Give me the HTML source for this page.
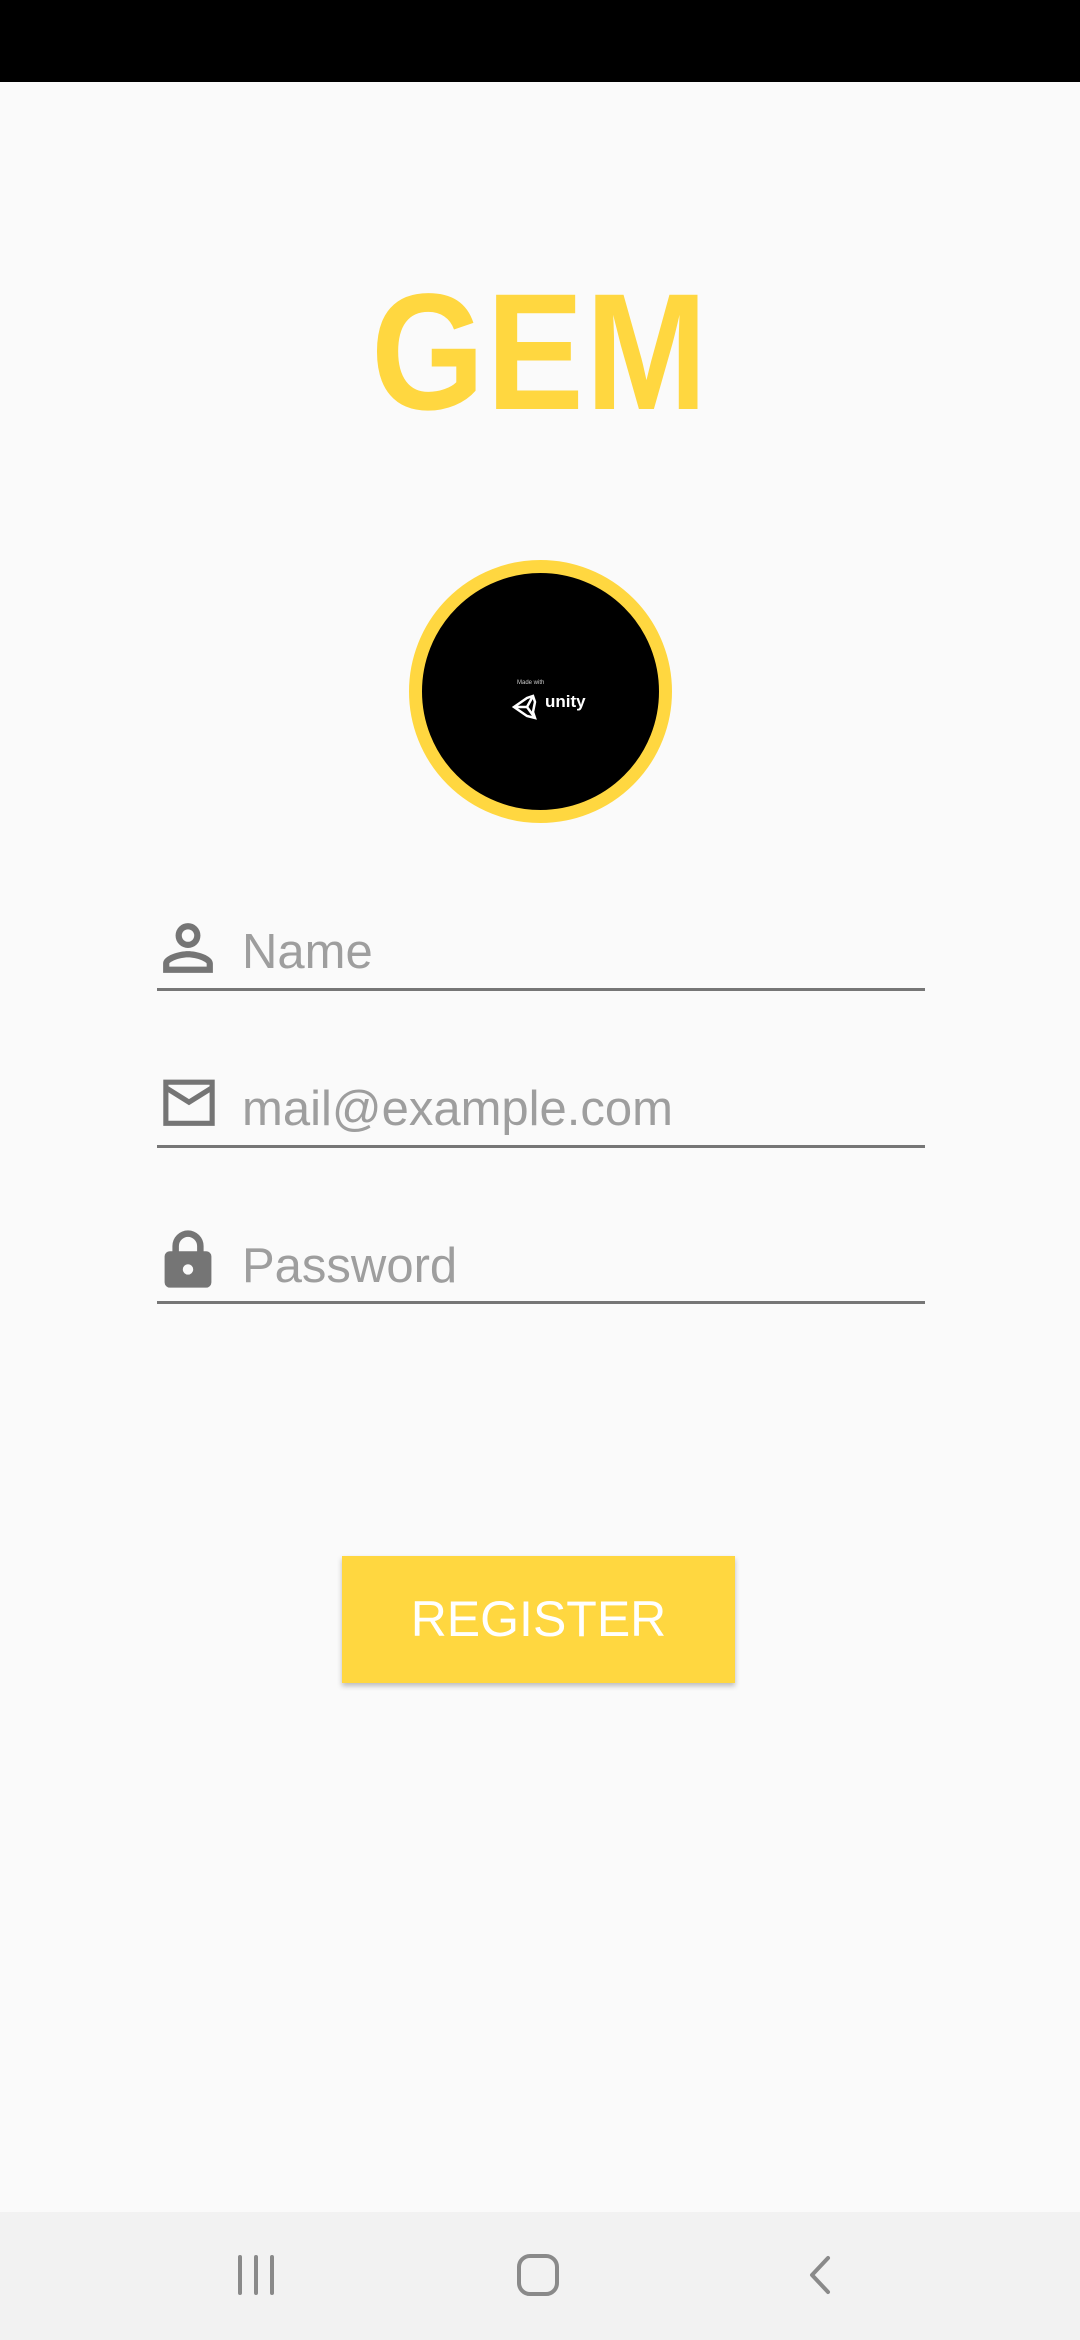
<!DOCTYPE html>
<html><head><meta charset="utf-8"><style>
*{margin:0;padding:0;box-sizing:border-box}
body{width:1080px;height:2340px;background:#fafafa;position:relative;overflow:hidden;font-family:"Liberation Sans",sans-serif}
.abs{position:absolute}
.status{left:0;top:0;width:1080px;height:82px;background:#000}
.gem{left:0;width:1080px;top:253px;text-align:center;font-size:166px;font-weight:bold;color:#FFD740;line-height:200px;transform:scaleX(0.88);letter-spacing:2px}
.circle{left:409px;top:560px;width:263px;height:263px;border-radius:50%;background:#000;border:13px solid #FFD740}
.line{left:157px;width:768px;height:3px;background:#767676}
.ph{left:242px;font-size:49px;color:#9e9e9e;line-height:1}
.btn{left:342px;top:1556px;width:393px;height:127px;background:#FFD740;color:#fff;font-size:50px;text-align:center;line-height:127px;box-shadow:0 3px 5px rgba(0,0,0,0.25)}
.nav{left:0;top:2212px;width:1080px;height:128px;background:#f2f2f2}
</style></head><body>
<div class="abs status"></div>
<div class="abs gem">GEM</div>
<div class="abs circle">
 <div class="abs" style="left:95px;top:107px;font-size:6px;color:#ccc">Made with</div>
 <svg class="abs" style="left:89px;top:119px" width="30" height="30" viewBox="0 0 30 30"><path d="M3 15 L16 6 L22 4 L24 10 L22 20 L24 26 L16 24 Z M3 15 L16 15 L22 4 M16 15 L24 26" fill="none" stroke="#fff" stroke-width="2.5"/></svg>
 <div class="abs" style="left:123px;top:119px;font-size:17px;color:#fff;font-weight:bold">unity</div>
</div>

<svg class="abs" style="left:160px;top:920px" width="56" height="56" viewBox="3 3 18 18"><path fill="#757575" d="M12 4a4 4 0 1 0 0 8 4 4 0 0 0 0-8zm0 2a2 2 0 1 1 0 4 2 2 0 0 1 0-4zm0 7c-2.7 0-8 1.3-8 4v3h16v-3c0-2.7-5.3-4-8-4zm0 2c3 0 6 1.5 6 2v1H6v-1c0-.5 3-2 6-2z"/></svg>
<div class="abs ph" style="top:928px">Name</div>
<div class="abs line" style="top:988px"></div>

<svg class="abs" style="left:158px;top:1077px" width="62" height="54" viewBox="0 1 24 21"><path fill="#757575" d="M2 2h20v18H2zM4 4v.6l8 5 8-5V4zm0 3v11h16V7l-8 5z"/></svg>
<div class="abs ph" style="top:1085px">mail@example.com</div>
<div class="abs line" style="top:1145px"></div>

<svg class="abs" style="left:162px;top:1230px" width="52" height="58" viewBox="0 0 20 22"><path fill="#757575" d="M4 8V6a6 6 0 0 1 12 0v2h1a2 2 0 0 1 2 2v10a2 2 0 0 1-2 2H3a2 2 0 0 1-2-2V10a2 2 0 0 1 2-2zm2.5 0h7V6a3.5 3.5 0 0 0-7 0zM10 13a2 2 0 1 0 0 4 2 2 0 0 0 0-4z"/></svg>
<div class="abs ph" style="top:1242px">Password</div>
<div class="abs line" style="top:1301px"></div>

<div class="abs btn">REGISTER</div>

<div class="abs nav">
 <svg class="abs" style="left:236px;top:42px" width="40" height="42" viewBox="0 0 40 42"><path d="M4 3v36M20 3v36M36 3v36" stroke="#8a8a8a" stroke-width="4" stroke-linecap="round"/></svg>
 <svg class="abs" style="left:515px;top:40px" width="46" height="46" viewBox="0 0 46 46"><rect x="4" y="4" width="38" height="38" rx="11" fill="none" stroke="#8a8a8a" stroke-width="4"/></svg>
 <svg class="abs" style="left:803px;top:42px" width="32" height="42" viewBox="0 0 32 42"><path d="M25 4L9 21l16 17" fill="none" stroke="#8a8a8a" stroke-width="4" stroke-linecap="round" stroke-linejoin="round"/></svg>
</div>
</body></html>
